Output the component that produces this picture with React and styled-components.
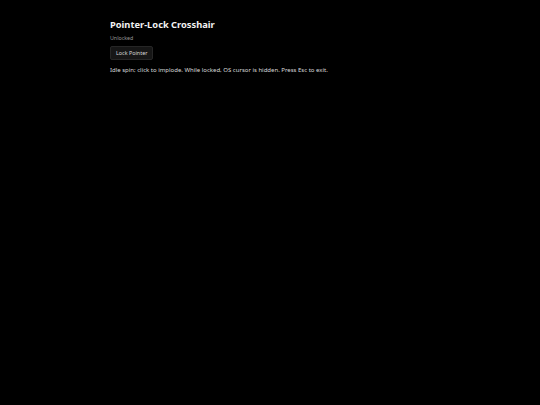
import React from 'react';
import styled, { createGlobalStyle } from 'styled-components';

const Global = createGlobalStyle`
  html, body {
    margin: 0;
    padding: 0;
    background: #000;
    height: 100%;
  }
  body {
    font-family: "Noto Sans", "DejaVu Sans", sans-serif;
    color: #e6e6e6;
  }
`;

const Wrap = styled.div`
  width: 320px;
  margin: 0 auto;
  padding-top: 18px;
  display: flex;
  flex-direction: column;
  align-items: flex-start;
`;

const Title = styled.h1`
  margin: 0;
  font-size: 9.3px;
  font-weight: 700;
  color: #f2f2f2;
  line-height: 14px;
`;

const Status = styled.div`
  margin-top: 2px;
  font-size: 5.3px;
  color: #9a9a9a;
  line-height: 8px;
`;

const Button = styled.button`
  margin-top: 4px;
  padding: 0 5px;
  height: 14px;
  font-family: inherit;
  font-size: 5.4px;
  color: #d8d8d8;
  background: #161616;
  border: 1px solid #262626;
  border-radius: 2px;
  cursor: pointer;
`;

const Hint = styled.p`
  margin: 6px 0 0;
  font-size: 6px;
  color: #dadada;
  line-height: 9px;
`;

export default function App() {
  return (
    <>
      <Global />
      <Wrap>
        <Title>Pointer-Lock Crosshair</Title>
        <Status>Unlocked</Status>
        <Button>Lock Pointer</Button>
        <Hint>Idle spin; click to implode. While locked, OS cursor is hidden. Press Esc to exit.</Hint>
      </Wrap>
    </>
  );
}
